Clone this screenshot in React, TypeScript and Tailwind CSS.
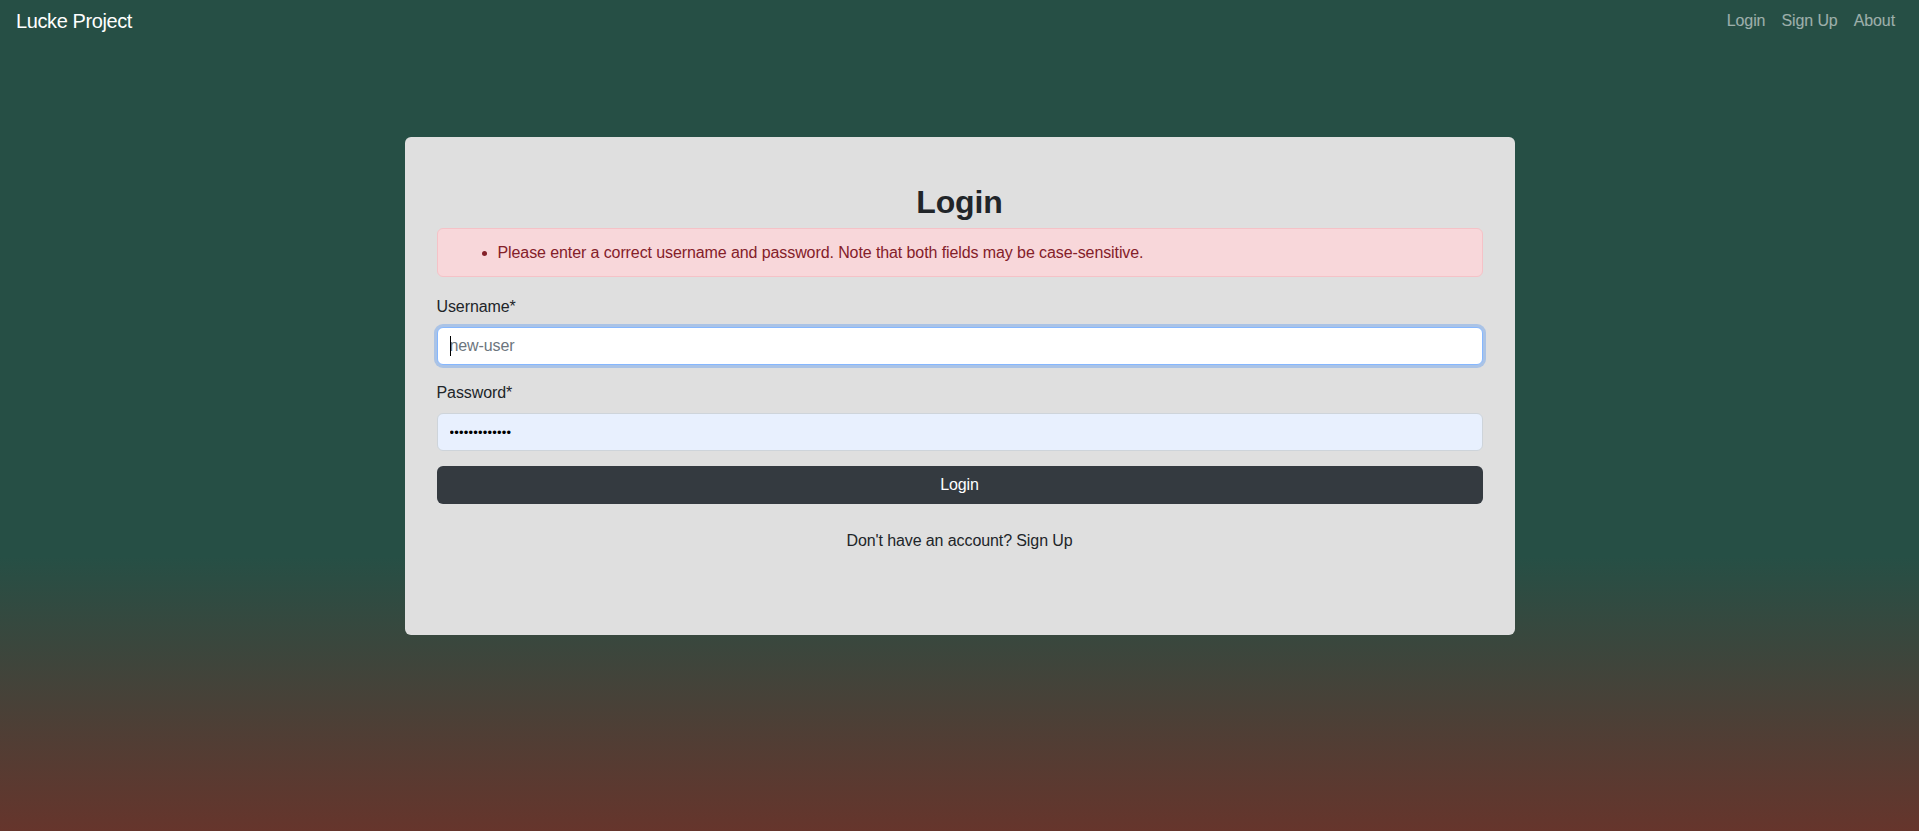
import { useState } from 'react';

const FONT = "font-['Liberation_Sans',Arial,sans-serif] tracking-[-0.006em]";

function Navbar() {
  return (
    <nav className="flex h-[42px] items-center justify-between px-4">
      <a href="#" className="text-[20px] leading-[30px] text-white tracking-[-0.02em]">Lucke Project</a>
      <ul className="flex items-center">
        {['Login', 'Sign Up', 'About'].map(item => (
          <li key={item}>
            <a href="#" className="px-2 text-base leading-6 text-white/55 hover:text-white/75">{item}</a>
          </li>
        ))}
      </ul>
    </nav>
  );
}

function LoginCard() {
  const [username, setUsername] = useState('');
  const [password, setPassword] = useState('secretpasswd!');

  return (
    <div className="mx-auto mt-[95px] w-[1110px] rounded-md bg-[#dfdfdf] px-8 pt-[45px] pb-[82px] text-[#212529]">
      <h2 className="mb-[7px] pt-px text-center text-[32px] font-bold leading-[1.2]">Login</h2>

      {/* error list */}
      <div className="rounded-md border border-[#f5c2c7] bg-[#f8d7da] px-4 py-3 text-[#842029]">
        <ul className="list-disc pl-[44px] leading-[23px]">
          <li>Please enter a correct username and password. Note that both fields may be case-sensitive.</li>
        </ul>
      </div>

      <form onSubmit={e => e.preventDefault()}>
        <div className="mt-[18px]">
          <label htmlFor="username" className="mb-2 block leading-6">Username*</label>
          <div className="relative">
            <input
              id="username"
              type="text"
              value={username}
              onChange={e => setUsername(e.target.value)}
              placeholder="new-user"
              className="block h-[38px] w-full rounded-md border border-[#86b7fe] bg-white px-3 text-base text-[#212529] shadow-[0_0_0_3px_rgba(13,110,253,0.25)] outline-none placeholder:text-[#6c757d]"
            />
            <span className="absolute left-[13px] top-[9px] h-[20px] w-px bg-black" />
          </div>
        </div>

        <div className="mt-4">
          <label htmlFor="password" className="mb-2 block leading-6">Password*</label>
          <input
            id="password"
            type="password"
            value={password}
            onChange={e => setPassword(e.target.value)}
            className="block h-[38px] w-full rounded-md border border-[#ced4da] bg-[#e8f0fe] px-3 text-[13px] tracking-[0.2px] text-black outline-none focus:border-[#86b7fe]"
          />
        </div>

        <button
          type="submit"
          className="mt-[15px] block h-[38px] w-full rounded-md bg-[#343a40] text-base text-white hover:bg-[#23272b]"
        >
          Login
        </button>
      </form>

      <p className="mt-[25px] text-center leading-6">
        Don't have an account? <a href="#" className="text-[#212529]">Sign Up</a>
      </p>
    </div>
  );
}

export default function App() {
  return (
    <div className={`${FONT} min-h-screen bg-[linear-gradient(to_bottom,#264f45_67%,#66352c)]`}>
      <Navbar />
      <LoginCard />
    </div>
  );
}
